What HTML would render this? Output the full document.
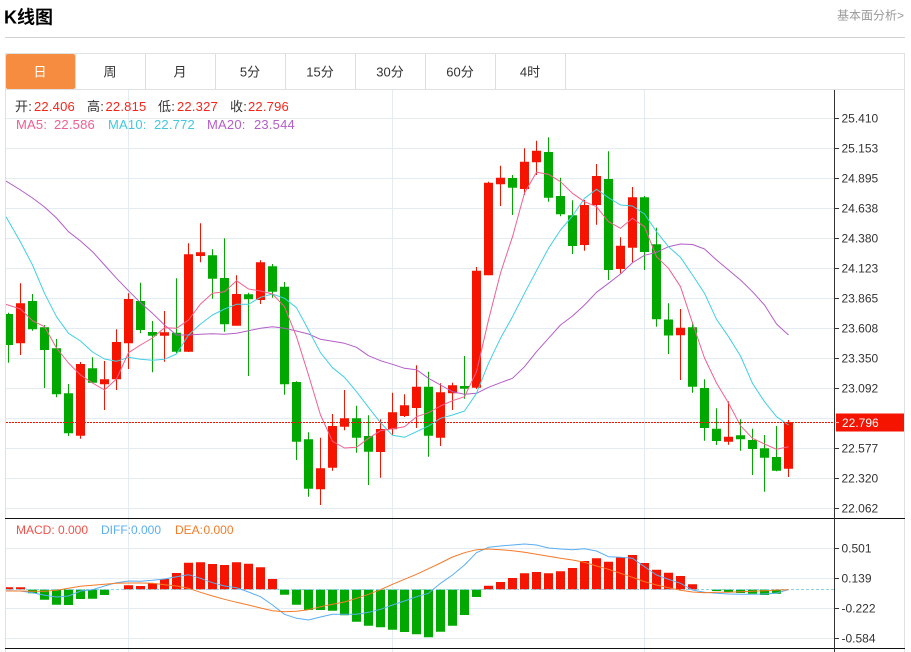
<!DOCTYPE html>
<html lang="zh">
<head>
<meta charset="utf-8">
<title>K线图</title>
<style>
html,body{margin:0;padding:0;background:#fff;width:911px;height:652px;overflow:hidden}
svg{display:block;position:absolute;left:0;top:0}
text{font-family:"Liberation Sans","Noto Sans CJK SC",sans-serif}
.ax{font-size:12px;fill:#333;letter-spacing:0}
.lg{font-size:13px;letter-spacing:.2px}
.md{font-size:12px}
.tab{font-size:13px;fill:#333;text-anchor:middle}
.l{fill:none;stroke-width:1;stroke-linejoin:round}
</style>
</head>
<body>
<svg width="911" height="652" viewBox="0 0 911 652" xmlns="http://www.w3.org/2000/svg">
<defs>
<clipPath id="c1"><rect x="6" y="90" width="828" height="428"/></clipPath>
<clipPath id="c2"><rect x="6" y="519" width="828" height="129"/></clipPath>
</defs>

<text x="4" y="23.5" font-size="18" font-weight="700" fill="#000">K线图</text>
<text x="837" y="19.5" font-size="12" fill="#999">基本面分析&gt;</text>
<path d="M5 37.5H905" stroke="#d2d2d2" fill="none"/>

<!-- frame -->
<path d="M5.5 652V53.5H904.5V652M5 89.5H905" stroke="#dfe1e3" fill="none"/>
<rect x="6" y="54" width="69" height="35" rx="2" fill="#f58c3f"/>
<path d="M75.5 54V89M145.5 54V89M215.5 54V89M285.5 54V89M355.5 54V89M425.5 54V89M495.5 54V89M565.5 54V89" stroke="#dcdee0" fill="none"/>
<text class="tab" x="40" y="76.5" style="fill:#fff">日</text>
<text class="tab" x="110" y="76.5">周</text>
<text class="tab" x="180" y="76.5">月</text>
<text class="tab" x="250" y="76.5">5分</text>
<text class="tab" x="320" y="76.5">15分</text>
<text class="tab" x="390" y="76.5">30分</text>
<text class="tab" x="460" y="76.5">60分</text>
<text class="tab" x="530" y="76.5">4时</text>

<!-- grid -->
<path d="M6 118.5H834M6 148.5H834M6 178.5H834M6 208.5H834M6 238.5H834M6 268.5H834M6 298.5H834M6 328.5H834M6 358.5H834M6 388.5H834M6 418.5H834M6 448.5H834M6 478.5H834M6 508.5H834M6 548.5H834M6 578.5H834M6 608.5H834M6 638.5H834M128.5 90V652M392.5 90V652M644.5 90V652" stroke="#e3ecf2" fill="none"/>

<!-- candles -->
<g clip-path="url(#c1)" fill="none">
<path stroke="#00a800" stroke-width="1" d="M8.5 312.7V362.7M32.5 294V330.7M44.5 325V388M56.5 339V397.3M68.5 384V436M92.5 357.3V382.7M140.5 282.7V333.3M152.5 321V372.3M176.5 278.3V353M212.5 249.3V298.7M224.5 238.3V331.7M248.5 292.7V376M272.5 264V297.7M284.5 282V394.7M296.5 381.3V460M308.5 432.3V496.7M356.5 405.7V452.7M368.5 415.3V485M428.5 371.7V456.7M464.5 356V398.7M512.5 175V215M548.5 137.3V201.7M560.5 177.7V216.3M572.5 200.3V254M608.5 151.3V280M644.5 196V270M656.5 227.7V326.7M668.5 303.3V354M692.5 322.3V392.7M704.5 379.3V440.7M716.5 408.3V445M740.5 419.3V450.7M752.5 428.7V475M764.5 435V491.7M776.5 426V471.3"/>
<path stroke="#00a800" stroke-width="9" d="M8.5 314V345M32.5 301V329.3M44.5 327.3V350M56.5 348.3V394.3M68.5 393.3V433.3M92.5 368.3V382.7M140.5 301V330M152.5 332V335.7M176.5 332.7V351.7M212.5 255.3V278.7M224.5 278V324.3M248.5 294.3V299.3M272.5 266.3V291.7M284.5 286.7V384.3M296.5 382V441.7M308.5 439.3V488.7M356.5 418.3V437.7M368.5 436V451.7M428.5 386.7V435.7M464.5 386V388.7M512.5 178V187.7M548.5 152V197.7M560.5 196V214.3M572.5 215.3V246M608.5 179V270M644.5 197.3V252M656.5 244.3V319.3M668.5 319.5V335.5M692.5 327.3V386.7M704.5 388V428M716.5 428.7V441M740.5 435.3V439.3M752.5 440V449M764.5 448.3V457.7M776.5 457V470.7"/>
<path stroke="#f51400" stroke-width="1" d="M20.5 283.3V355M80.5 362V438.7M104.5 361V410M116.5 329.3V390M128.5 293.3V369M164.5 311V361.7M188.5 243.3V352M200.5 223.3V262.3M236.5 275.3V325.7M260.5 260.3V304M320.5 437.7V505M332.5 414V470.7M344.5 390V430.3M380.5 419.3V477.7M392.5 392.7V435M404.5 394.3V417M416.5 365.3V428M440.5 383.3V446M452.5 382.7V410M476.5 267V389M488.5 181.7V275.3M500.5 165.7V206M524.5 148.3V195M536.5 140.7V175M584.5 200V250.7M596.5 164V224.7M620.5 237.3V273.3M632.5 187V262.3M680.5 309V380M728.5 401.3V444.7M788.5 420V477"/>
<path stroke="#f51400" stroke-width="9" d="M20.5 303.3V343.3M80.5 364V435.7M104.5 379.3V384.3M116.5 342V379.3M128.5 299V343.3M164.5 332.3V335.7M188.5 254.3V351.7M200.5 252.3V256M236.5 294V325.7M260.5 262.3V300M320.5 468.3V489.3M332.5 426V467.7M344.5 418.3V426.7M380.5 429V452M392.5 412.3V429.3M404.5 405.3V416M416.5 386.7V408M440.5 392.3V437.7M452.5 385.3V393.3M476.5 270.7V387.7M488.5 182.7V275.3M500.5 177.7V184.3M524.5 161.7V189M536.5 150.7V162.3M584.5 205V245M596.5 176V205M620.5 245.7V269M632.5 197.3V247.7M680.5 327.7V335.3M728.5 436.7V441.7M788.5 422.3V468.7"/>

<!-- MA20 -->
<polyline class="l" stroke="#b45ec8" points="6,181 20.5,190 32.5,198 44.5,207 56.5,218 68.5,231.7 80.5,241 92.5,251.7 104.5,265 116.5,278.3 128.5,290.7 140.5,302.7 152.5,313.3 164.5,325 176.5,335 188.5,335 200.5,334.3 212.5,333.7 224.5,334.3 236.5,333.3 248.5,330.7 260.5,328.3 272.5,326.7 284.5,328.3 296.5,331 308.5,334 320.5,339.3 332.5,341.3 344.5,343.3 356.5,347.3 368.5,355.7 380.5,360.7 392.5,364.3 404.5,368.3 416.5,369.7 428.5,378.3 440.5,385 452.5,391.7 464.5,394.3 476.5,393.3 488.5,387.3 500.5,382.7 512.5,378.3 524.5,366.7 536.5,351.7 548.5,338.3 560.5,325 572.5,316 584.5,305 596.5,292.3 608.5,283.3 620.5,274 632.5,262.7 644.5,255.3 656.5,252.3 668.5,246.7 680.5,244 692.5,244.5 704.5,249 716.5,260 728.5,270 740.5,280 752.5,291.7 764.5,305 776.5,324 788.5,335"/>
<!-- MA10 -->
<polyline class="l" stroke="#42cfe2" points="6,216.7 20.5,242 32.5,265 44.5,293.3 56.5,316.7 68.5,333.3 80.5,341 92.5,352 104.5,359 116.5,361.3 128.5,357.3 140.5,359.3 152.5,360.3 164.5,359.3 176.5,354 188.5,335 200.5,324 212.5,315 224.5,309 236.5,304.3 248.5,304.3 260.5,297.3 272.5,294 284.5,298.3 296.5,307.7 308.5,330 320.5,352.7 332.5,367.7 344.5,377.3 356.5,391.7 368.5,407.3 380.5,422.7 392.5,435.3 404.5,437.3 416.5,431.7 428.5,426 440.5,418.3 452.5,415 464.5,411 476.5,393.3 488.5,363.3 500.5,338.3 512.5,316.7 524.5,293.3 536.5,270.7 548.5,248.3 560.5,230 572.5,216 584.5,198.3 596.5,189.3 608.5,197.7 620.5,205 632.5,206 644.5,214 656.5,231.7 668.5,246.7 680.5,257.3 692.5,275 704.5,293.3 716.5,319.3 728.5,336.7 740.5,356 752.5,383.3 764.5,401.7 776.5,416.7 788.5,425"/>
<!-- MA5 -->
<polyline class="l" stroke="#f0608f" points="6,304.3 20.5,309 32.5,320.7 44.5,326.7 56.5,348 68.5,363 80.5,375 92.5,383 104.5,390 116.5,379 128.5,352.7 140.5,345 152.5,338 164.5,327.7 176.5,328.3 188.5,320 200.5,304 212.5,293.3 224.5,291.7 236.5,280.7 248.5,289 260.5,291 272.5,294 284.5,306.7 296.5,336.7 308.5,375 320.5,415 332.5,441.3 344.5,448 356.5,447.3 368.5,438.3 380.5,430.7 392.5,428.7 404.5,426.7 416.5,416.7 428.5,412.7 440.5,406 452.5,400.7 464.5,396.7 476.5,371.7 488.5,320 500.5,273 512.5,236.7 524.5,193 536.5,172.3 548.5,174.3 560.5,181.7 572.5,193.3 584.5,201.7 596.5,206.7 608.5,221.7 620.5,228.3 632.5,218.3 644.5,226.7 656.5,256.7 668.5,268.3 680.5,286.7 692.5,323 704.5,358 716.5,383 728.5,403 740.5,425.7 752.5,438.3 764.5,444 776.5,449.3 788.5,446.7"/>
<path d="M6 422.5H834" stroke="#f51400" stroke-dasharray="2 1" fill="none"/>
</g>

<!-- MACD -->
<g clip-path="url(#c2)" fill="none">
<path stroke="#f51400" stroke-width="9" d="M8.5 587.3V589.5M20.5 587.3V589.5M128.5 585.3V589.5M140.5 586V589.5M152.5 583.3V589.5M164.5 579V589.5M176.5 573V589.5M188.5 562.7V589.5M200.5 562.3V589.5M212.5 564V589.5M224.5 565V589.5M236.5 562.3V589.5M248.5 563.7V589.5M260.5 567.3V589.5M272.5 579V589.5M488.5 585.7V589.5M500.5 582V589.5M512.5 578V589.5M524.5 573.3V589.5M536.5 572V589.5M548.5 573.3V589.5M560.5 571.3V589.5M572.5 568V589.5M584.5 561V589.5M596.5 558.3V589.5M608.5 561.7V589.5M620.5 557V589.5M632.5 555V589.5M644.5 563V589.5M656.5 569.7V589.5M668.5 572.7V589.5M680.5 576V589.5M692.5 584.3V589.5"/>
<path stroke="#00a800" stroke-width="9" d="M32.5 589.5V593.3M44.5 589.5V599.7M56.5 589.5V604.7M68.5 589.5V605M80.5 589.5V599M92.5 589.5V598.7M104.5 589.5V595M284.5 589.5V594.7M296.5 589.5V604.7M308.5 589.5V610M320.5 589.5V610M332.5 589.5V610.7M344.5 589.5V615.3M356.5 589.5V621.7M368.5 589.5V625.7M380.5 589.5V627.3M392.5 589.5V629.7M404.5 589.5V632M416.5 589.5V634.3M428.5 589.5V637.3M440.5 589.5V631.7M452.5 589.5V625.7M464.5 589.5V615M476.5 589.5V597M716.5 589.5V591M728.5 589.5V592M740.5 589.5V593M752.5 589.5V593.7M764.5 589.5V595M776.5 589.5V593.7"/>
<path d="M6 589.5H834" stroke="#86d3ea" stroke-dasharray="3 2"/>
<polyline class="l" stroke="#5aaef2" points="6,590.7 20.5,591 32.5,592.7 44.5,595.3 56.5,597 68.5,596 80.5,591 92.5,589.7 104.5,586 116.5,582.7 128.5,581 140.5,581.3 152.5,580.3 164.5,579 176.5,576.7 188.5,574.7 200.5,578.3 212.5,582.7 224.5,586 236.5,587.7 248.5,592 260.5,596.7 272.5,605 284.5,614.3 296.5,618.3 308.5,620 320.5,617 332.5,614.3 344.5,614.3 356.5,614.3 368.5,612.3 380.5,609.3 392.5,605 404.5,601 416.5,596.7 428.5,593.3 440.5,583.3 452.5,575 464.5,565 476.5,552.7 488.5,547.3 500.5,546 512.5,545 524.5,544 536.5,545 548.5,548 560.5,549 572.5,549.7 584.5,548.7 596.5,551 608.5,556.7 620.5,557.3 632.5,558.3 644.5,566.7 656.5,575 668.5,579.3 680.5,583.3 692.5,590 704.5,592.3 716.5,593.3 728.5,594 740.5,594.3 752.5,594.3 764.5,594 776.5,593 788.5,589.7"/>
<polyline class="l" stroke="#f57a28" points="6,591 20.5,591 32.5,591.3 44.5,591.3 56.5,590.3 68.5,588.3 80.5,586.3 92.5,585.3 104.5,584.3 116.5,583.3 128.5,583 140.5,583 152.5,583.3 164.5,584.7 176.5,586 188.5,588.3 200.5,592.3 212.5,596 224.5,599.3 236.5,602.3 248.5,605 260.5,608 272.5,610.7 284.5,611.7 296.5,611.3 308.5,609.7 320.5,606.7 332.5,604.3 344.5,602 356.5,598.3 368.5,594.3 380.5,589.7 392.5,584.3 404.5,579.3 416.5,574.3 428.5,568.7 440.5,563 452.5,557 464.5,552.7 476.5,549.7 488.5,549 500.5,549.7 512.5,550.7 524.5,552.3 536.5,554.3 548.5,556.3 560.5,558.3 572.5,560 584.5,562.3 596.5,566 608.5,569.3 620.5,573.3 632.5,577.3 644.5,581.7 656.5,585 668.5,587.7 680.5,590.3 692.5,592 704.5,592.7 716.5,592.3 728.5,592.3 740.5,591.7 752.5,591.3 764.5,590.7 776.5,590 788.5,589.7"/>
</g>

<!-- separators and axis -->
<path d="M5 518.5H905M5 648.5H905" stroke="#111" fill="none"/>
<path d="M834.5 90V652" stroke="#333" fill="none"/>
<path d="M835 118.5H839M835 148.5H839M835 178.5H839M835 208.5H839M835 238.5H839M835 268.5H839M835 298.5H839M835 328.5H839M835 358.5H839M835 388.5H839M835 448.5H839M835 478.5H839M835 508.5H839M835 548.5H839M835 578.5H839M835 608.5H839M835 638.5H839" stroke="#333" fill="none"/>

<g class="ax">
<text class="ax" x="841.5" y="122.5">25.410</text>
<text class="ax" x="841.5" y="152.5">25.153</text>
<text class="ax" x="841.5" y="182.5">24.895</text>
<text class="ax" x="841.5" y="212.5">24.638</text>
<text class="ax" x="841.5" y="242.5">24.380</text>
<text class="ax" x="841.5" y="272.5">24.123</text>
<text class="ax" x="841.5" y="302.5">23.865</text>
<text class="ax" x="841.5" y="332.5">23.608</text>
<text class="ax" x="841.5" y="362.5">23.350</text>
<text class="ax" x="841.5" y="392.5">23.092</text>
<text class="ax" x="841.5" y="452.5">22.577</text>
<text class="ax" x="841.5" y="482.5">22.320</text>
<text class="ax" x="841.5" y="512.5">22.062</text>
<text class="ax" x="841.5" y="552.5">0.501</text>
<text class="ax" x="841.5" y="582.5">0.139</text>
<text class="ax" x="841.5" y="612.5">-0.222</text>
<text class="ax" x="841.5" y="642.5">-0.584</text>
</g>
<rect x="836" y="413.5" width="68" height="18" fill="#f51400"/>
<path d="M835 422.5H839" stroke="#ffb0a0" fill="none"/>
<text x="842" y="427" font-size="12" fill="#fff">22.796</text>

<!-- legend -->
<g class="lg">
<text class="lg" x="15" y="111" fill="#333">开:</text><text class="lg" x="34" y="111" fill="#f5261a">22.406</text>
<text class="lg" x="87" y="111" fill="#333">高:</text><text class="lg" x="105.5" y="111" fill="#f5261a">22.815</text>
<text class="lg" x="158" y="111" fill="#333">低:</text><text class="lg" x="177" y="111" fill="#f5261a">22.327</text>
<text class="lg" x="230" y="111" fill="#333">收:</text><text class="lg" x="248" y="111" fill="#f5261a">22.796</text>
<text class="lg" x="16" y="129" fill="#f0608f">MA5:</text><text class="lg" x="54" y="129" fill="#f0608f">22.586</text>
<text class="lg" x="108" y="129" fill="#42c8de">MA10:</text><text class="lg" x="154" y="129" fill="#42c8de">22.772</text>
<text class="lg" x="207" y="129" fill="#b45ec8">MA20:</text><text class="lg" x="254" y="129" fill="#b45ec8">23.544</text>
</g>
<text class="md" x="16" y="534" fill="#f4504a">MACD:</text><text class="md" x="58" y="534" fill="#f4504a">0.000</text>
<text class="md" x="101" y="534" fill="#5aaef2">DIFF:</text><text class="md" x="131" y="534" fill="#5aaef2">0.000</text>
<text class="md" x="175" y="534" fill="#f57a28">DEA:</text><text class="md" x="203.5" y="534" fill="#f57a28">0.000</text>
</svg>
</body>
</html>
